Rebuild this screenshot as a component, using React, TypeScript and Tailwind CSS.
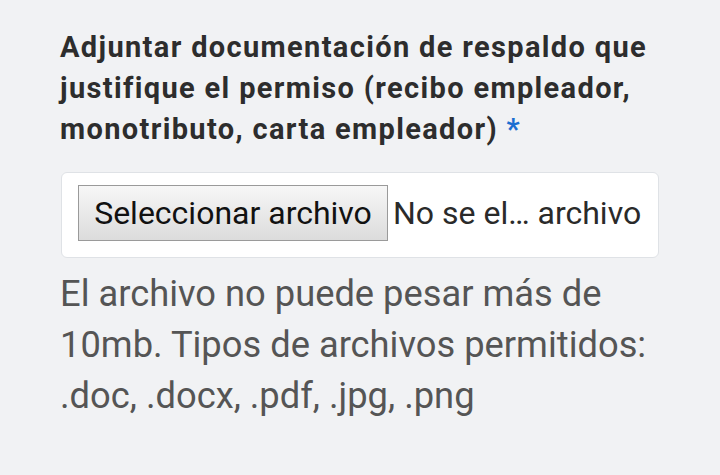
export default function App() {
  return (
    <div className="w-[720px] h-[475px] bg-[#f1f2f4] pl-[60px] pr-[61px] pt-[27px] font-['Roboto',sans-serif]">
      <label className="block text-[29px] leading-[41px] font-bold tracking-[1.35px] text-[#2d2d2d]">
        Adjuntar documentación de respaldo que justifique el permiso (recibo empleador, monotributo, carta empleador){" "}
        <span className="text-[#1b6fd1]">*</span>
      </label>
      <div className="mt-[22px] ml-px bg-white border border-[#dfe2e6] rounded-[6px] h-[86px] pl-[16px] pt-[12px] flex items-start">
        <div className="w-[310px] h-[56px] shrink-0 border border-[#9a9a9a] bg-gradient-to-b from-[#f7f7f7] to-[#dcdcdc] flex items-center justify-center text-[32px] text-[#111] whitespace-nowrap">
          Seleccionar archivo
        </div>
        <div className="ml-[5px] h-[56px] flex items-center text-[32px] text-[#2a2a2a] whitespace-nowrap">
          No se el… archivo
        </div>
      </div>
      <p className="mt-[10px] text-[36.3px] leading-[51px] text-[#555]">
        El archivo no puede pesar más de 10mb. Tipos de archivos permitidos: .doc, .docx, .pdf, .jpg, .png
      </p>
    </div>
  );
}
